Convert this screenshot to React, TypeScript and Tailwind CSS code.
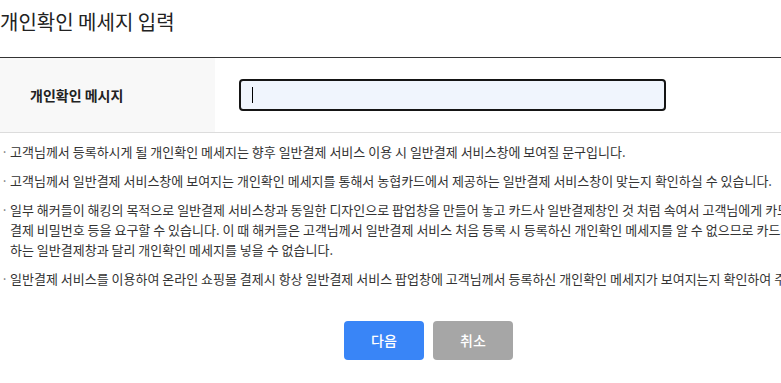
import { useState } from 'react'

const notices: string[][] = [
  ['고객님께서 등록하시게 될 개인확인 메세지는 향후 일반결제 서비스 이용 시 일반결제 서비스창에 보여질 문구입니다.'],
  ['고객님께서 일반결제 서비스창에 보여지는 개인확인 메세지를 통해서 농협카드에서 제공하는 일반결제 서비스창이 맞는지 확인하실 수 있습니다.'],
  [
    '일부 해커들이 해킹의 목적으로 일반결제 서비스창과 동일한 디자인으로 팝업창을 만들어 놓고 카드사 일반결제창인 것 처럼 속여서 고객님에게 카드번호, 유효기간, 일반',
    '결제 비밀번호 등을 요구할 수 있습니다. 이 때 해커들은 고객님께서 일반결제 서비스 처음 등록 시 등록하신 개인확인 메세지를 알 수 없으므로 카드사에서 제공',
    '하는 일반결제창과 달리 개인확인 메세지를 넣을 수 없습니다.',
  ],
  ['일반결제 서비스를 이용하여 온라인 쇼핑몰 결제시 항상 일반결제 서비스 팝업창에 고객님께서 등록하신 개인확인 메세지가 보여지는지 확인하여 주시기 바랍니다.'],
]

export default function App() {
  const [message, setMessage] = useState('')

  return (
    <div className="w-full min-h-screen overflow-hidden bg-white font-['Noto_Sans_CJK_KR','Noto_Sans',sans-serif]">
      <div className="w-[857px]">
        {/* Title */}
        <h1 className="h-[45px] pt-[7px] text-[20px] leading-[30px] text-[#222] whitespace-nowrap">
          개인확인 메세지 입력
        </h1>

        {/* Form row */}
        <div className="mt-[12px] border-t border-[#333] border-b border-b-[#dcdcdc] flex h-[76px]">
          <div className="w-[215px] bg-[#f8f8f8] flex items-center pl-[30px] text-[14px] font-bold text-[#222]">
            개인확인 메시지
          </div>
          <div className="flex items-center pl-[24px]">
            <div className="relative">
              <input
                autoFocus
                value={message}
                onChange={(e) => setMessage(e.target.value)}
                className="w-[427px] h-[32px] rounded-[4px] border-2 border-[#151515] bg-[#f0f5fd] px-[11px] text-[13px] outline-none caret-black"
              />
              {message === '' && (
                <span className="pointer-events-none absolute left-[13px] top-[8px] h-[16px] w-px bg-black" />
              )}
            </div>
          </div>
        </div>

        {/* Notices */}
        <ul className="mt-[9px] flex flex-col gap-[9px] text-[13px] leading-[20px] text-[#333]">
          {notices.map((lines, i) => (
            <li key={i} className="relative pl-[10px] whitespace-nowrap">
              <span className="absolute left-[1px] top-0 text-[#777]">·</span>
              {lines.map((l, j) => (
                <div key={j}>{l}</div>
              ))}
            </li>
          ))}
        </ul>

        {/* Buttons */}
        <div className="mt-[32px] flex justify-center gap-[9px]">
          <button className="w-[80px] h-[39px] rounded-[4px] bg-[#3985f7] text-white text-[14px] font-medium">
            다음
          </button>
          <button className="w-[80px] h-[39px] rounded-[4px] bg-[#a6a6a6] text-white text-[14px] font-medium">
            취소
          </button>
        </div>
      </div>
    </div>
  )
}
